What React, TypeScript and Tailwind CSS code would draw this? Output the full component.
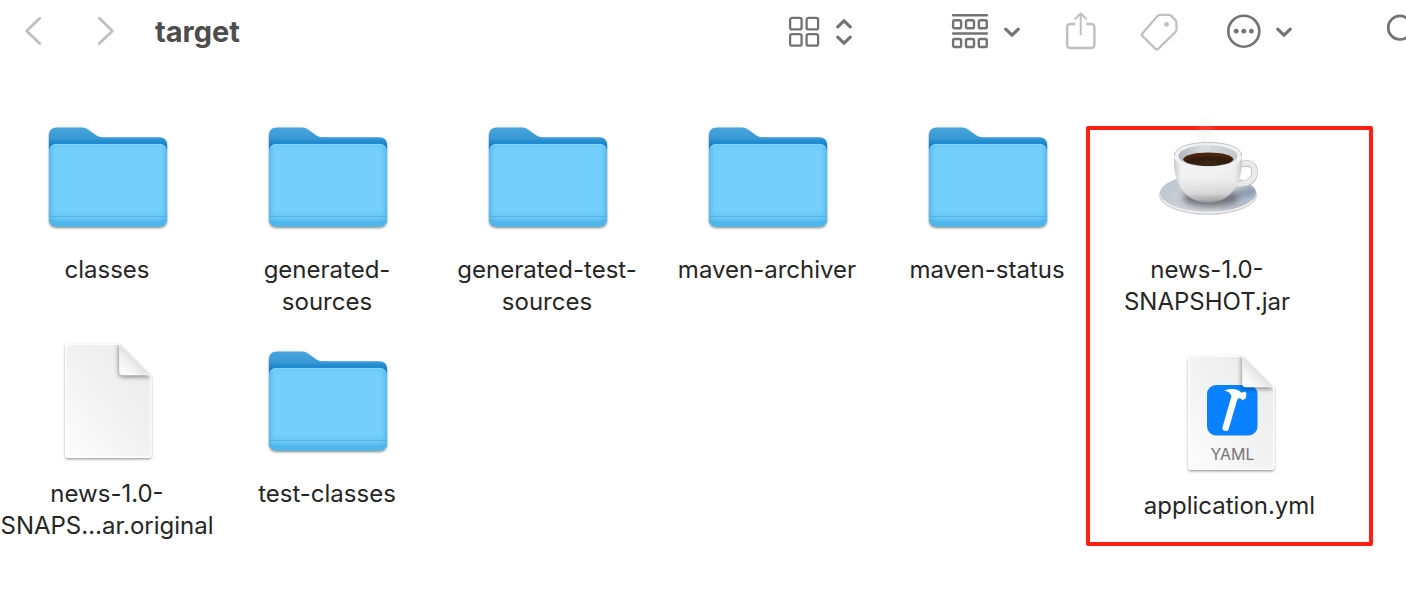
import type { ReactNode } from 'react';

function ChevronDown() {
    return (
        <svg className="w-[18px] h-8" viewBox="0 0 18 32" fill="none" stroke="currentColor" strokeWidth={3.2} strokeLinecap="round" strokeLinejoin="round">
            <path d="M2.7 13.2 9 19.2l6.3-6" />
        </svg>
    );
}

function Toolbar() {
    return (
        <header className="flex items-center h-16 pl-[23px] overflow-hidden text-[#737373]">
            <button type="button" aria-label="Back" className="shrink-0 text-[#bfbfbf]">
                <svg className="w-5 h-8" viewBox="0 0 20 32" fill="none" stroke="currentColor" strokeWidth={2.8} strokeLinecap="round" strokeLinejoin="round">
                    <path d="M16.8 2.3 3.6 15l13.2 12.6" />
                </svg>
            </button>
            <button type="button" aria-label="Forward" className="shrink-0 ml-[52px] text-[#bfbfbf]">
                <svg className="w-5 h-8" viewBox="0 0 20 32" fill="none" stroke="currentColor" strokeWidth={2.8} strokeLinecap="round" strokeLinejoin="round">
                    <path d="M4.3 2.3 17.5 15 4.3 27.6" />
                </svg>
            </button>
            <h1 className="ml-10 text-[29px] leading-8 font-bold text-[#4d4d4d]">target</h1>

            <button type="button" aria-label="Icon view" className="flex shrink-0 items-center gap-3.5 ml-auto">
                <svg className="w-8 h-8" viewBox="0 0 32 32" fill="none" stroke="currentColor" strokeWidth={2.3}>
                    <rect x="2.1" y="1.9" width="11.5" height="11.5" rx="2" />
                    <rect x="18.6" y="1.9" width="11.5" height="11.5" rx="2" />
                    <rect x="2.1" y="18.2" width="11.5" height="11.5" rx="2" />
                    <rect x="18.6" y="18.2" width="11.5" height="11.5" rx="2" />
                </svg>
                <svg className="w-5 h-8" viewBox="0 0 20 32" fill="none" stroke="currentColor" strokeWidth={3.2} strokeLinecap="round" strokeLinejoin="round">
                    <path d="M3.7 10.8 10 4.8l6.3 6M3.7 21.2l6.3 6 6.3-6" />
                </svg>
            </button>
            <button type="button" aria-label="Group items" className="flex shrink-0 items-center gap-3.5 ml-[97px]">
                <svg className="w-[38px] h-9" viewBox="0 0 38 36" fill="none" stroke="currentColor" strokeWidth={2.4} strokeLinecap="round">
                    <path d="M2.1 1.3h33.8M2.1 19.5h33.8" />
                    <rect x="2.1" y="6.3" width="8" height="8" rx="1.6" />
                    <rect x="15" y="6.3" width="8" height="8" rx="1.6" />
                    <rect x="27.8" y="6.3" width="8" height="8" rx="1.6" />
                    <rect x="2.1" y="25" width="8" height="8" rx="1.6" />
                    <rect x="15" y="25" width="8" height="8" rx="1.6" />
                    <rect x="27.8" y="25" width="8" height="8" rx="1.6" />
                </svg>
                <ChevronDown />
            </button>
            <button type="button" aria-label="Share" className="shrink-0 ml-11 text-[#bfbfbf]">
                <svg className="w-8 h-10" viewBox="0 0 32 40" fill="none" stroke="currentColor" strokeWidth={2.4} strokeLinecap="round" strokeLinejoin="round">
                    <path d="M15.7 22.6V1.8M10.2 6.8l5.5-5.3 5.5 5.3" strokeWidth={2} />
                    <path d="M10.4 12H5.2a3 3 0 0 0-3 3v18a3 3 0 0 0 3 3h21.2a3 3 0 0 0 3-3V15a3 3 0 0 0-3-3h-5.2" strokeLinecap="butt" />
                </svg>
            </button>
            <button type="button" aria-label="Edit tags" className="shrink-0 ml-[43px] text-[#bfbfbf]">
                <svg className="w-10 h-10" viewBox="0 0 40 40" fill="none" stroke="currentColor" strokeWidth={2.3} strokeLinejoin="round">
                    <path d="M20.5 2.8h8.2q1.8 0 3 1.3l3.6 3.9q1.2 1.3 1.2 3.2v6q0 1.8-1.3 3.1L18.4 36.6q-1.6 1.6-3.2 0L2.7 24.3q-1.5-1.6 0-3.2L17.3 4.3q1.4-1.5 3.2-1.5z" />
                    <circle cx="26.5" cy="12.4" r="2.4" fill="currentColor" stroke="none" />
                </svg>
            </button>
            <button type="button" aria-label="More actions" className="flex shrink-0 items-center gap-[13px] ml-[46px]">
                <svg className="w-9 h-9" viewBox="0 0 36 36" fill="currentColor">
                    <circle cx="17.8" cy="17.2" r="15.5" fill="none" stroke="currentColor" strokeWidth={2.6} />
                    <circle cx="10.2" cy="17.2" r="2.4" />
                    <circle cx="17.8" cy="17.2" r="2.4" />
                    <circle cx="25.4" cy="17.2" r="2.4" />
                </svg>
                <ChevronDown />
            </button>
            <button type="button" aria-label="Search" className="shrink-0 ml-[93px] -mr-3">
                <svg className="w-8 h-8 overflow-visible" viewBox="0 0 32 32" fill="none" stroke="currentColor" strokeWidth={2.7} strokeLinecap="round">
                    <circle cx="14" cy="11.7" r="11.8" />
                    <path d="m23 20 8 8" />
                </svg>
            </button>
        </header>
    );
}

function FolderIcon() {
    return (
        <svg className="w-32 h-32 overflow-visible" viewBox="0 0 128 128">
            <defs>
                <linearGradient id="folder-back" x1="0" y1="0" x2="0" y2="1">
                    <stop offset="0" stopColor="#46a5dc" />
                    <stop offset="0.1" stopColor="#3b9bd5" />
                    <stop offset="0.18" stopColor="#0d80c9" />
                </linearGradient>
                <linearGradient id="folder-front" x1="0" y1="0" x2="0" y2="1">
                    <stop offset="0" stopColor="#6bc9f8" />
                    <stop offset="0.1" stopColor="#74cffc" />
                    <stop offset="0.8" stopColor="#74cffc" />
                    <stop offset="0.87" stopColor="#6bc8f6" />
                </linearGradient>
                <linearGradient id="folder-edge" x1="0" y1="0" x2="1" y2="0">
                    <stop offset="0" stopColor="#4bb4ea" stopOpacity="0.7" />
                    <stop offset="0.05" stopColor="#4bb4ea" stopOpacity="0" />
                    <stop offset="0.95" stopColor="#4bb4ea" stopOpacity="0" />
                    <stop offset="1" stopColor="#4bb4ea" stopOpacity="0.7" />
                </linearGradient>
                <filter id="folder-shadow" x="-10%" y="-10%" width="120%" height="125%">
                    <feDropShadow dx="0" dy="1.2" stdDeviation="1" floodColor="#000" floodOpacity="0.5" />
                </filter>
            </defs>
            <g filter="url(#folder-shadow)">
                <path d="M6 21.500q0-8 8-8h25q3.500 0 6 2l8 5.800q2.800 2 6 2h57q8 0 8 8V104.500q0 8-8 8H14q-8 0-8-8z" fill="url(#folder-back)" />
                <path d="M6 37.500q0-7.500 7.500-7.500h103q7.500 0 7.500 7.500v67q0 8-8 8H14q-8 0-8-8z" fill="url(#folder-front)" />
            </g>
            <path d="M6 37.500q0-7.500 7.500-7.500h103q7.500 0 7.500 7.500v67q0 8-8 8H14q-8 0-8-8z" fill="url(#folder-edge)" />
            <path d="M6.200 107h117.600q-1.800 5.500-7.800 5.500H14q-6 0-7.800-5.500z" fill="#4fb7ea" />
            <path d="M6 102.500h118M6 106h118" stroke="#50b2e2" strokeWidth={0.9} />
            <path d="M8 33q2-2.600 5.500-2.600h103q3.500 0 5.500 2.600" fill="none" stroke="#8dd7fb" strokeWidth={0.8} />
        </svg>
    );
}

// Blank sheet with a turned corner; children are printed on the sheet, under the fold
function DocumentIcon({ children }: { children?: ReactNode }) {
    return (
        <svg className="w-32 h-32 overflow-visible" viewBox="0 0 128 128">
            <defs>
                <linearGradient id="sheet" x1="0.9" y1="0.1" x2="0.1" y2="0.9">
                    <stop offset="0" stopColor="#ebebeb" />
                    <stop offset="0.5" stopColor="#f2f2f2" />
                    <stop offset="1" stopColor="#fbfbfb" />
                </linearGradient>
                <linearGradient id="sheet-fold" x1="0" y1="1" x2="0.5" y2="0.5">
                    <stop offset="0" stopColor="#ffffff" />
                    <stop offset="0.5" stopColor="#f6f6f6" />
                    <stop offset="1" stopColor="#e2e2e2" />
                </linearGradient>
                <filter id="sheet-shadow" x="-10%" y="-10%" width="120%" height="120%">
                    <feDropShadow dx="0" dy="1.4" stdDeviation="1.1" floodColor="#000" floodOpacity="0.38" />
                </filter>
                <filter id="fold-shadow" x="-50%" y="-50%" width="200%" height="200%">
                    <feGaussianBlur stdDeviation="2.6" />
                </filter>
                <clipPath id="sheet-clip">
                    <path d="M25 5.500h51.500l32 32V117q0 3-3 3H25q-3 0-3-3V8.500q0-3 3-3z" />
                </clipPath>
            </defs>
            <path d="M25 5.500h51.500l32 32V117q0 3-3 3H25q-3 0-3-3V8.500q0-3 3-3z" fill="url(#sheet)" filter="url(#sheet-shadow)" />
            <g clipPath="url(#sheet-clip)">
                {children}
                <path d="M76 4v31q0 3.500 3.500 3.500H108z" fill="#000" opacity="0.5" filter="url(#fold-shadow)" />
            </g>
            <path d="M25.500 6.200h50.500l31.700 32V116.500q0 2.700-2.700 2.700H25.500q-2.700 0-2.700-2.700V9q0-2.800 2.700-2.800z" fill="none" stroke="#fff" strokeWidth={1.4} opacity="0.85" />
            <path d="M76.500 5.500v28.500q0 3 3 3H108z" fill="url(#sheet-fold)" stroke="#fff" strokeWidth={0.6} />
        </svg>
    );
}

function YamlIcon() {
    return (
        <DocumentIcon>
            <rect x="41" y="35" width="50.500" height="50.500" rx="9" fill="#0a82ff" />
            <path d="M58 40.800q4.500-2.600 11-1.600 4.500.8 6.200 3.200 1.800.4 3.300-.8l1.800 1.400-.3 5-3.300 2.200q-1.500-2-3.800-2-1.300.2-1.800 2L62.500 79.400q-.8 2-3.200 1.600-3.400-.6-2.800-3.800L65.500 46q-1.500-4.600-7.500-5.200z" fill="#fff" />
            <text x="66.500" y="110" textAnchor="middle" fontSize="16" fill="#757575">YAML</text>
        </DocumentIcon>
    );
}

function CoffeeIcon() {
    return (
        <svg className="w-32 h-28 overflow-visible" viewBox="0 16 128 112">
            <defs>
                <linearGradient id="saucer" x1="0" y1="0" x2="1" y2="0.3">
                    <stop offset="0" stopColor="#b9c3cf" />
                    <stop offset="0.35" stopColor="#c9cdd3" />
                    <stop offset="0.8" stopColor="#d3d6db" />
                    <stop offset="1" stopColor="#b4c0cf" />
                </linearGradient>
                <linearGradient id="cup" x1="0" y1="0" x2="0" y2="1">
                    <stop offset="0" stopColor="#f4f4f5" />
                    <stop offset="0.5" stopColor="#ececed" />
                    <stop offset="0.8" stopColor="#d2d2d3" />
                    <stop offset="1" stopColor="#8f8f90" />
                </linearGradient>
                <linearGradient id="cup-side" x1="0" y1="0" x2="1" y2="0">
                    <stop offset="0" stopColor="#8d949c" stopOpacity="0.5" />
                    <stop offset="0.12" stopColor="#fff" stopOpacity="0.2" />
                    <stop offset="0.85" stopColor="#fff" stopOpacity="0" />
                    <stop offset="1" stopColor="#85888c" stopOpacity="0.45" />
                </linearGradient>
                <linearGradient id="cup-inner" x1="0" y1="0" x2="1" y2="0">
                    <stop offset="0" stopColor="#aeb4bb" />
                    <stop offset="0.4" stopColor="#dcdfe2" />
                    <stop offset="1" stopColor="#c2c6ca" />
                </linearGradient>
                <radialGradient id="coffee" cx="0.5" cy="0.85" r="0.65">
                    <stop offset="0" stopColor="#3a2b16" />
                    <stop offset="0.7" stopColor="#2f1a0b" />
                    <stop offset="1" stopColor="#4a2410" />
                </radialGradient>
                <filter id="cup-blur" x="-50%" y="-50%" width="200%" height="200%">
                    <feGaussianBlur stdDeviation="3" />
                </filter>
                <clipPath id="saucer-clip">
                    <ellipse cx="65" cy="80" rx="48.500" ry="19.500" />
                </clipPath>
            </defs>
            <ellipse cx="65" cy="81" rx="48.800" ry="19.800" fill="#c4c5c7" />
            <ellipse cx="65" cy="80.300" rx="48.300" ry="19.500" fill="#f1f1f2" />
            <ellipse cx="65" cy="79" rx="48" ry="18.600" fill="url(#saucer)" />
            <g clipPath="url(#saucer-clip)">
                <ellipse cx="68" cy="84" rx="28" ry="9" fill="#3f434a" opacity="0.65" filter="url(#cup-blur)" />
                <path d="M92 78q12-5 23-4l-2 6-24 5z" fill="#5b7188" opacity="0.6" filter="url(#cup-blur)" />
            </g>
            <path d="M96 51q15.500-5 15.500 7 0 12.500-18.500 12.500" fill="none" stroke="#b5b8bb" strokeWidth={6.400} />
            <path d="M96 50.700q15.500-5 15.500 7 0 12.500-18.500 12.500" fill="none" stroke="#e8e9ea" strokeWidth={5.200} />
            <path d="M31 43C30 68 41 88.500 65 88.500S100 68 99 43z" fill="url(#cup)" />
            <path d="M31 43C30 68 41 88.500 65 88.500S100 68 99 43z" fill="url(#cup-side)" />
            <ellipse cx="65" cy="42.500" rx="34" ry="14" fill="#f1f1f2" />
            <path d="M31.500 42C31.500 33 47 28.500 65 28.500S98.500 33 98.500 42" fill="none" stroke="#b5bbc2" strokeWidth={0.9} />
            <ellipse cx="65" cy="42" rx="29.500" ry="10.800" fill="url(#cup-inner)" />
            <ellipse cx="65.300" cy="45.300" rx="25" ry="6.700" fill="url(#coffee)" />
            <path d="M58 34q-5-14 1-30h8q5 14 1 30z" fill="#c8c8c8" opacity="0.16" filter="url(#cup-blur)" />
            <path d="M65 20q-3 5-1 9 2 3 1 6" fill="none" stroke="#fff" strokeWidth={1.200} opacity="0.4" />
        </svg>
    );
}

function FileItem({ icon, lines }: { icon: ReactNode; lines: string[] }) {
    return (
        <figure className="flex flex-col items-center gap-3">
            {icon}
            <figcaption className="min-h-16 text-center text-2xl leading-8 whitespace-nowrap text-[#262626]">
                {lines.map(line => (
                    <span key={line} className="block">{line}</span>
                ))}
            </figcaption>
        </figure>
    );
}

const files = [
    { lines: ['classes'], folder: true },
    { lines: ['generated-', 'sources'], folder: true },
    { lines: ['generated-test-', 'sources'], folder: true },
    { lines: ['maven-archiver'], folder: true },
    { lines: ['maven-status'], folder: true },
    { lines: ['news-1.0-', 'SNAPS…ar.original'], folder: false },
    { lines: ['test-classes'], folder: true },
];

export default function App() {
    return (
        <div className="min-h-screen overflow-x-hidden bg-white font-['Inter',sans-serif]">
            <Toolbar />
            <main className="flex items-start pt-[50px] pr-[33px]">
                <ul className="grid flex-1 grid-cols-5 gap-x-6 gap-y-5 pl-[9px] pr-px">
                    {files.map(file => (
                        <li key={file.lines.join('')} className="min-w-0">
                            <FileItem icon={file.folder ? <FolderIcon /> : <DocumentIcon />} lines={file.lines} />
                        </li>
                    ))}
                </ul>
                {/* highlighted build output and its config */}
                <section aria-label="Files to deploy" className="flex shrink-0 flex-col gap-8 w-[287px] mt-3 border-4 border-[#fe2015] rounded-xs">
                    <div className="pr-[45px]">
                        <FileItem icon={<CoffeeIcon />} lines={['news-1.0-', 'SNAPSHOT.jar']} />
                    </div>
                    <div className="-mb-3">
                        <FileItem icon={<YamlIcon />} lines={['application.yml']} />
                    </div>
                </section>
            </main>
        </div>
    );
}
